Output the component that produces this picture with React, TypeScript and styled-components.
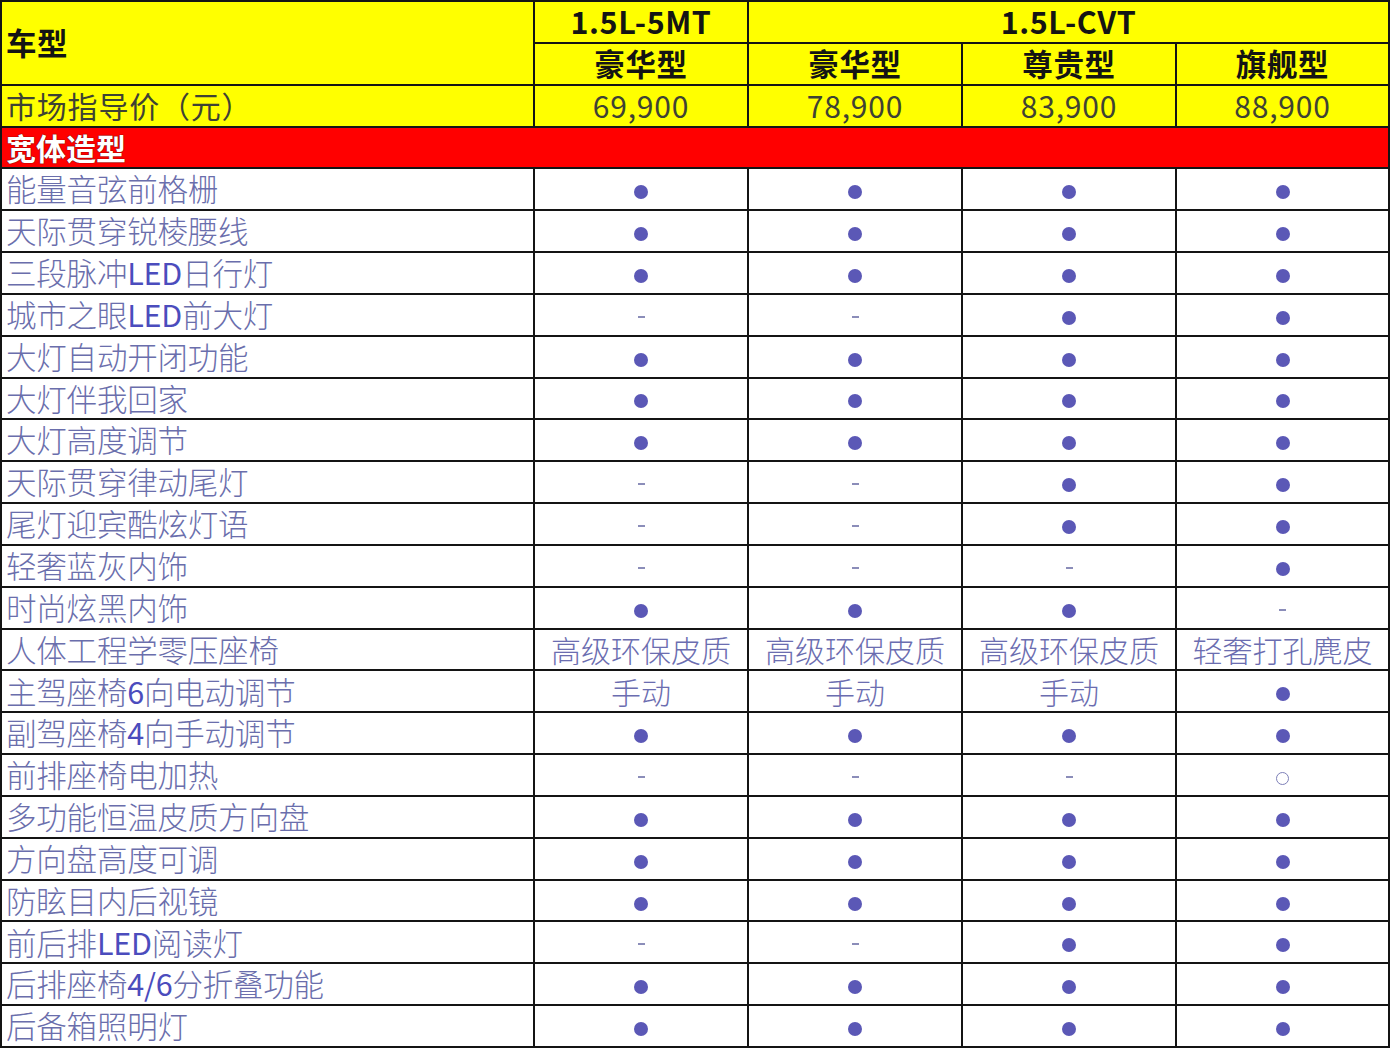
import React from 'react';
import styled, { createGlobalStyle } from 'styled-components';

const GlobalStyle = createGlobalStyle`
  html, body {
    margin: 0;
    padding: 0;
    background: #ffffff;
  }
  body {
    font-family: "Noto Sans CJK SC", "Noto Sans", sans-serif;
  }
`;

const Sheet = styled.div`
  box-sizing: border-box;
  width: 1390px;
  height: 1048px;
  display: grid;
  grid-template-columns: 531px repeat(3, 212px) 211px;
  grid-template-rows: repeat(25, 1fr);
  gap: 2px;
  padding: 2px;
  background: #141414;
`;

const Cell = styled.div<{ $align?: 'left' | 'center' }>`
  display: flex;
  align-items: center;
  justify-content: ${(p) => (p.$align === 'left' ? 'flex-start' : 'center')};
  padding: 0 ${(p) => (p.$align === 'left' ? '4px' : '0')};
  min-height: 0;
  background: #ffffff;
  white-space: nowrap;
  line-height: 1.3;
`;

const HeadCell = styled(Cell)<{ $rows?: number; $cols?: number }>`
  background: #ffff00;
  color: #141414;
  font-weight: 700;
  font-size: 30.5px;
  letter-spacing: 0.6px;
  grid-row: span ${(p) => p.$rows ?? 1};
  grid-column: span ${(p) => p.$cols ?? 1};
`;

const PriceCell = styled(Cell)`
  background: #ffff00;
  color: #3e4234;
  font-size: 30px;
  font-weight: 400;
  letter-spacing: 0.8px;
`;

const SectionCell = styled(Cell)`
  grid-column: 1 / -1;
  background: #ff0000;
  color: #ffffff;
  font-weight: 700;
  font-size: 30px;
  text-shadow: 0 0 1px #5a0000, 0 0 1px #5a0000;
`;

const LabelCell = styled(Cell)`
  color: #6a6eac;
  font-size: 30.5px;
  font-weight: 300;
  letter-spacing: -0.2px;

  b {
    font-weight: 400;
    color: #4b4cbd;
  }
`;

const ValueCell = styled(Cell)`
  color: #6b6db0;
  font-size: 30px;
  font-weight: 300;
`;

const Dot = styled.span`
  width: 14px;
  height: 14px;
  border-radius: 50%;
  background: #5b58b6;
  margin-top: 6px;
`;

const Dash = styled.span`
  width: 7px;
  height: 2px;
  background: #8b8db9;
  margin-top: 4px;
`;

const Ring = styled.span`
  box-sizing: border-box;
  width: 13px;
  height: 13px;
  border-radius: 50%;
  border: 1.5px solid #7d7fb8;
  margin-top: 6px;
`;

type Row = [string, string, string, string, string];

const ALL: [string, string, string, string] = ['●', '●', '●', '●'];

const rows: Row[] = [
  ['能量音弦前格栅', ...ALL],
  ['天际贯穿锐棱腰线', ...ALL],
  ['三段脉冲LED日行灯', ...ALL],
  ['城市之眼LED前大灯', '-', '-', '●', '●'],
  ['大灯自动开闭功能', ...ALL],
  ['大灯伴我回家', ...ALL],
  ['大灯高度调节', ...ALL],
  ['天际贯穿律动尾灯', '-', '-', '●', '●'],
  ['尾灯迎宾酷炫灯语', '-', '-', '●', '●'],
  ['轻奢蓝灰内饰', '-', '-', '-', '●'],
  ['时尚炫黑内饰', '●', '●', '●', '-'],
  ['人体工程学零压座椅', '高级环保皮质', '高级环保皮质', '高级环保皮质', '轻奢打孔麂皮'],
  ['主驾座椅6向电动调节', '手动', '手动', '手动', '●'],
  ['副驾座椅4向手动调节', ...ALL],
  ['前排座椅电加热', '-', '-', '-', '○'],
  ['多功能恒温皮质方向盘', ...ALL],
  ['方向盘高度可调', ...ALL],
  ['防眩目内后视镜', ...ALL],
  ['前后排LED阅读灯', '-', '-', '●', '●'],
  ['后排座椅4/6分折叠功能', ...ALL],
  ['后备箱照明灯', ...ALL],
];

// latin runs (LED, 4/6 ...) are a deeper blue in the source sheet
const Label: React.FC<{ text: string }> = ({ text }) => (
  <span>
    {text.split(/([A-Za-z0-9/]+)/).map((part, i) =>
      i % 2 === 1 ? <b key={i}>{part}</b> : <React.Fragment key={i}>{part}</React.Fragment>
    )}
  </span>
);

const Value: React.FC<{ v: string }> = ({ v }) => {
  if (v === '●') return <Dot />;
  if (v === '-') return <Dash />;
  if (v === '○') return <Ring />;
  return <span>{v}</span>;
};

const App: React.FC = () => (
  <>
    <GlobalStyle />
    <Sheet>
      <HeadCell $align="left" $rows={2}>车型</HeadCell>
      <HeadCell>1.5L-5MT</HeadCell>
      <HeadCell $cols={3}>1.5L-CVT</HeadCell>
      <HeadCell>豪华型</HeadCell>
      <HeadCell>豪华型</HeadCell>
      <HeadCell>尊贵型</HeadCell>
      <HeadCell>旗舰型</HeadCell>

      <PriceCell $align="left">市场指导价（元）</PriceCell>
      <PriceCell>69,900</PriceCell>
      <PriceCell>78,900</PriceCell>
      <PriceCell>83,900</PriceCell>
      <PriceCell>88,900</PriceCell>

      <SectionCell $align="left">宽体造型</SectionCell>

      {rows.map(([label, ...vals]) => (
        <React.Fragment key={label}>
          <LabelCell $align="left">
            <Label text={label} />
          </LabelCell>
          {vals.map((v, i) => (
            <ValueCell key={i}>
              <Value v={v} />
            </ValueCell>
          ))}
        </React.Fragment>
      ))}
    </Sheet>
  </>
);

export default App;
